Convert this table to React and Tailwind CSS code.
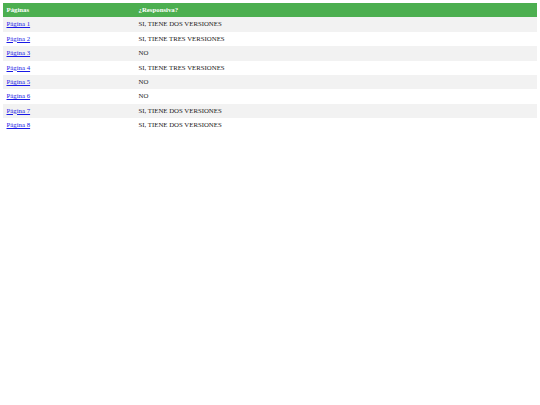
const ROWS = [
  ['Página 1', 'SI, TIENE DOS VERSIONES'],
  ['Página 2', 'SI, TIENE TRES VERSIONES'],
  ['Página 3', 'NO'],
  ['Página 4', 'SI, TIENE TRES VERSIONES'],
  ['Página 5', 'NO'],
  ['Página 6', 'NO'],
  ['Página 7', 'SI, TIENE DOS VERSIONES'],
  ['Página 8', 'SI, TIENE DOS VERSIONES'],
];

export default function App() {
  return (
    <div className="min-h-[405px] bg-white p-[3px] font-['Liberation_Serif',serif] text-[6.8px] text-[#222]">
      <table className="w-full border-collapse text-left">
        <thead>
          <tr className="h-[14.4px] bg-[#4CAF50] text-white">
            <th className="w-[132px] px-[3.5px] py-0 align-middle font-bold">Páginas</th>
            <th className="px-[3.5px] py-0 align-middle font-bold">¿Responsiva?</th>
          </tr>
        </thead>
        <tbody>
          {ROWS.map(([page, resp], i) => (
            <tr key={page} className={`h-[14.4px] ${i % 2 === 0 ? 'bg-[#f2f2f2]' : 'bg-white'}`}>
              <td className="px-[3.5px] py-0 align-middle">
                <a href="#" className="text-[#1a1ae6] underline">{page}</a>
              </td>
              <td className="px-[3.5px] py-0 align-middle">{resp}</td>
            </tr>
          ))}
        </tbody>
      </table>
    </div>
  );
}
